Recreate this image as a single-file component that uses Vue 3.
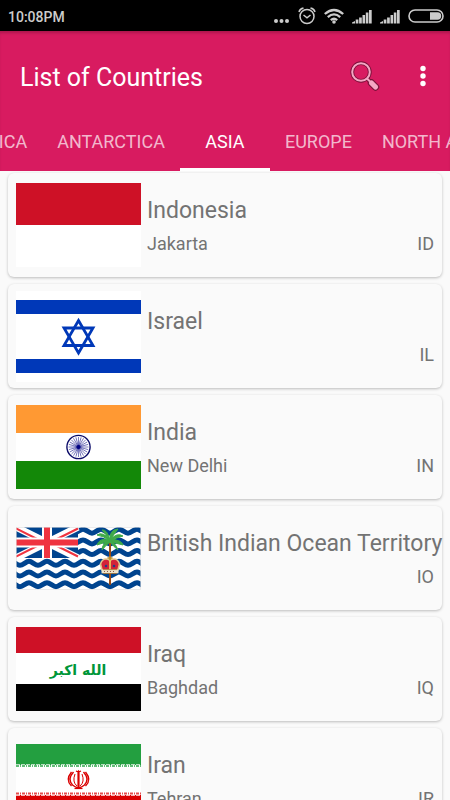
<script setup>
import { ref } from 'vue'

const tabs = ['Africa', 'Antarctica', 'Asia', 'Europe', 'North America']
const activeTab = ref('Asia')

const countries = [
  { code: 'ID', name: 'Indonesia', capital: 'Jakarta' },
  { code: 'IL', name: 'Israel', capital: '' },
  { code: 'IN', name: 'India', capital: 'New Delhi' },
  { code: 'IO', name: 'British Indian Ocean Territory', capital: '' },
  { code: 'IQ', name: 'Iraq', capital: 'Baghdad' },
  { code: 'IR', name: 'Iran', capital: 'Tehran' }
]

// one wavy stripe, 18 units per period
const wave = (y) => {
  let d = `M-5 ${y}`
  for (let x = -5; x < 130; x += 18) {
    d += 'c3 0 6 4 9 4s6 -4 9 -4'
  }
  return d
}
</script>

<template>
  <div class="app">
    <div class="status-bar">
      <span class="clock">10:08PM</span>
      <svg class="status-dots" viewBox="0 0 16 20" width="16" height="20" fill="#ccc">
        <circle cx="2" cy="15" r="2"/>
        <circle cx="7.500" cy="15" r="2"/>
        <circle cx="13" cy="15" r="2"/>
      </svg>
      <svg class="status-alarm" viewBox="0 0 18 20" width="18" height="20" fill="none" stroke="#ccc" stroke-width="1.500">
        <circle cx="9" cy="10.500" r="7"/>
        <path d="M5.500 9L9 11.800L12.500 9M1 6C1.500 4 3 2.500 5.500 2M17 6C16.500 4 15 2.500 12.500 2"/>
      </svg>
      <svg class="status-wifi" viewBox="0 0 20 20" width="20" height="20" fill="none" stroke="#ccc" stroke-width="2.300">
        <path d="M0.800 8Q10 0 19.200 8M3.800 11.200Q10 5.600 16.200 11.200M6.800 14.200Q10 11.400 13.200 14.200"/>
        <circle cx="10" cy="16" r="1.800" fill="#ccc" stroke="none"/>
      </svg>
      <svg v-for="n in 2" :key="n" class="status-signal" viewBox="0 0 20 20" width="20" height="20" fill="#ccc">
        <path d="M0 17.500v-1l3-1.500v2.500zM3.700 17.500v-4h2.700v4zM7.100 17.500v-6h2.700v6zM10.500 17.500V9h2.600v8.500zM13.800 17.500V6.500h2.600v11zM17 17.500V4h2.700v13.500z"/>
      </svg>
      <svg class="status-battery" viewBox="0 0 36 20" width="36" height="20">
        <rect x="1" y="4" width="34" height="12" rx="6" fill="none" stroke="#ccc" stroke-width="1.600"/>
        <path d="M22 6.300h7.500a3.700 3.700 0 0 1 0 7.400h-7.500z" fill="#ccc"/>
      </svg>
    </div>

    <header class="header">
      <div class="toolbar">
        <h1 class="title">List of Countries</h1>
        <button class="icon-button" type="button" aria-label="Search">
          <svg viewBox="0 0 30 30" width="30" height="30" fill="none">
            <circle cx="11" cy="11" r="8.800" stroke="#7a1039" stroke-width="3.800"/>
            <path d="M17 17.500L20 20.500" stroke="#7a1039" stroke-width="4"/>
            <path d="M21.500 22L25.500 26" stroke="#7a1039" stroke-width="7.400" stroke-linecap="round"/>
            <circle cx="11" cy="11" r="8.800" stroke="#f5a6c4" stroke-width="2"/>
            <path d="M17 17.500L20 20.500" stroke="#f5a6c4" stroke-width="2"/>
            <path d="M21.500 22L25.500 26" stroke="#f5a6c4" stroke-width="5.200" stroke-linecap="round"/>
          </svg>
        </button>
        <button class="icon-button" type="button" aria-label="More options">
          <svg viewBox="0 0 30 30" width="30" height="30" fill="#fff">
            <circle cx="15" cy="7.500" r="2.700"/>
            <circle cx="15" cy="15" r="2.700"/>
            <circle cx="15" cy="22.500" r="2.700"/>
          </svg>
        </button>
      </div>
      <nav class="tabs">
        <button
          v-for="tab in tabs"
          :key="tab"
          type="button"
          class="tab"
          :class="{ 'is-active': tab === activeTab }"
          @click="activeTab = tab"
        >
          {{ tab }}
        </button>
      </nav>
    </header>

    <main class="list">
      <article v-for="country in countries" :key="country.code" class="card">
        <div class="flag">
          <!-- Indonesia -->
          <svg v-if="country.code === 'ID'" viewBox="0 0 125 84">
            <rect width="125" height="84" fill="#fff"/>
            <rect width="125" height="42" fill="#ce1126"/>
          </svg>

          <!-- Israel -->
          <svg v-else-if="country.code === 'IL'" viewBox="0 0 125 91">
            <rect width="125" height="91" fill="#fff"/>
            <rect y="9" width="125" height="14" fill="#0038b8"/>
            <rect y="68" width="125" height="14" fill="#0038b8"/>
            <g fill="none" stroke="#0038b8" stroke-width="2.800">
              <path d="M62.500 29.500L77 54.500H48z"/>
              <path d="M62.500 62L77 37H48z"/>
            </g>
          </svg>

          <!-- India -->
          <svg v-else-if="country.code === 'IN'" viewBox="0 0 125 84">
            <rect width="125" height="84" fill="#fff"/>
            <rect width="125" height="28" fill="#ff9933"/>
            <rect y="56" width="125" height="28" fill="#138808"/>
            <circle cx="62.500" cy="42" r="11.600" fill="#fff" stroke="#0b0b68" stroke-width="1.400"/>
            <g stroke="#000080" stroke-width="0.500">
              <line
                v-for="n in 24"
                :key="n"
                x1="62.500"
                y1="42"
                x2="62.500"
                y2="32"
                :transform="`rotate(${n * 15} 62.500 42)`"
              />
            </g>
            <circle cx="62.500" cy="42" r="2" fill="#000080"/>
          </svg>

          <!-- British Indian Ocean Territory -->
          <svg v-else-if="country.code === 'IO'" viewBox="0 0 125 63">
            <rect width="125" height="63" fill="#fff"/>
            <g fill="none" stroke="#00448f" stroke-width="5">
              <path v-for="n in 6" :key="n" :d="wave(n * 10.700 - 8.500)"/>
            </g>
            <rect width="62" height="31" fill="#00448f"/>
            <path d="M0 0L62 31M62 0L0 31" stroke="#fff" stroke-width="7"/>
            <path d="M0 1.500L26 14.500M36 16.500L62 29.500M62 1.500L36 14.500M26 16.500L0 29.500" stroke="#ef3340" stroke-width="2"/>
            <path d="M31 0V31M0 15.500H62" stroke="#fff" stroke-width="10"/>
            <path d="M31 0V31M0 15.500H62" stroke="#ef3340" stroke-width="6"/>
            <path d="M94 14V58" stroke="#9a4a14" stroke-width="2"/>
            <g fill="#3faa49" stroke="#3faa49" stroke-width="1">
              <path d="M94 13Q87 4 81 8Q88 9 94 14z"/>
              <path d="M94 13Q91 2 86 3Q90 7 94 14z"/>
              <path d="M94 13Q93 3 102 2Q97 8 94 14z"/>
              <path d="M94 13Q101 5 107 9Q99 11 94 14z"/>
              <path d="M94 12Q106 13 107 18Q100 16 94 15z"/>
              <path d="M94 12Q83 11 81 18Q88 15 94 15z"/>
              <path d="M94 13Q86 16 86 23Q90 18 94 15z"/>
              <path d="M94 13Q101 18 102 23Q97 19 94 15z"/>
            </g>
            <path d="M86 43L84.500 37Q86 32 90 32Q94 32 94 35Q94 32 98 32Q102 32 103.500 37L102 43z" fill="#d32338" stroke="#e3c68a" stroke-width="1.600"/>
            <path d="M94 31V44" stroke="#e8c55a" stroke-width="1.800"/>
            <path d="M91.500 31H96.500M94 29V33" stroke="#b98b2c" stroke-width="1.400"/>
            <path d="M85.500 44.500H102.500" stroke="#efe3c8" stroke-width="3.600"/>
            <path d="M87 42.600H101M87 46.500H101" stroke="#a8742e" stroke-width="0.800"/>
            <path d="M88 44.500H100" stroke="#8c5a4a" stroke-width="1" stroke-dasharray="1 2"/>
            <circle cx="90" cy="39" r="1.300" fill="#243c86"/>
            <circle cx="98" cy="39" r="1.300" fill="#243c86"/>
            <rect x="0.500" y="0.500" width="124" height="62" fill="none" stroke="#ddd" stroke-opacity="0.600"/>
          </svg>

          <!-- Iraq -->
          <svg v-else-if="country.code === 'IQ'" viewBox="0 0 125 84">
            <rect width="125" height="84" fill="#fff"/>
            <rect width="125" height="26" fill="#ce1126"/>
            <rect y="57" width="125" height="27" fill="#000"/>
            <text class="takbir" x="62" y="48" text-anchor="middle">الله اكبر</text>
          </svg>

          <!-- Iran -->
          <svg v-else viewBox="0 0 125 72">
            <rect width="125" height="72" fill="#fff"/>
            <rect width="125" height="21" fill="#239f40"/>
            <rect y="51" width="125" height="21" fill="#da0000"/>
            <path d="M0 22H125" stroke="#239f40" stroke-opacity="0.700" stroke-width="2" stroke-dasharray="3 1 1 1"/>
            <path d="M0 20.500H125" stroke="#b5dfbf" stroke-width="1" stroke-dasharray="4 1"/>
            <path d="M0 49.500H125" stroke="#da0000" stroke-opacity="0.700" stroke-width="2" stroke-dasharray="3 1 1 1"/>
            <path d="M0 51.500H125" stroke="#f6b5b5" stroke-width="1" stroke-dasharray="4 1"/>
            <g fill="none" stroke="#da0000">
              <path d="M62.500 28V44.500" stroke-width="2.200"/>
              <path d="M60 27Q62 28 62.500 27Q63 28 65 27" stroke-width="1.200"/>
              <path d="M57.500 28Q51 35 56.500 41Q59 43 62 44" stroke-width="1.500"/>
              <path d="M67.500 28Q74 35 68.500 41Q66 43 63 44" stroke-width="1.500"/>
              <path d="M55.500 28Q49 36 55.500 42" stroke-width="1.400"/>
              <path d="M69.500 28Q76 36 69.500 42" stroke-width="1.400"/>
              <path d="M59 30Q56 38 61 42M66 30Q69 38 64 42" stroke-width="1"/>
              <path d="M58.500 44.500H66.500" stroke-width="1.200"/>
            </g>
          </svg>
        </div>
        <div class="info">
          <h2 class="name">{{ country.name }}</h2>
          <div class="details">
            <span>{{ country.capital }}</span>
            <span class="code">{{ country.code }}</span>
          </div>
        </div>
      </article>
    </main>
  </div>
</template>

<style>
body {
  margin: 0;
  background: #fafafa;
}
</style>

<style scoped>
.app {
  display: flex;
  flex-direction: column;
  height: 100vh;
  overflow: hidden;
  background: #fafafa;
  font-family: Roboto, "Liberation Sans", sans-serif;
}

.status-bar {
  display: flex;
  align-items: center;
  flex: none;
  height: 31px;
  padding: 0 6px 0 8px;
  box-sizing: border-box;
  background: #000;
}

.clock {
  flex: 1;
  padding-top: 2px;
  color: #ccc;
  font-size: 14px;
  font-weight: 500;
  line-height: 20px;
}

.status-alarm,
.status-wifi,
.status-signal,
.status-battery {
  margin-left: 8px;
}

.header {
  flex: none;
  background: #d81b60;
  box-shadow: inset 0 3px 3px -1px rgba(0, 0, 0, 0.2);
}

.toolbar {
  display: flex;
  align-items: center;
  height: 82px;
  padding: 8px 12px 0 20px;
  box-sizing: border-box;
}

.title {
  flex: 1;
  margin: 0;
  padding-top: 4px;
  color: #fff;
  font-size: 25px;
  font-weight: 400;
  line-height: 32px;
}

.icon-button {
  padding: 0;
  border: 0;
  background: none;
  cursor: pointer;
}

.icon-button + .icon-button {
  margin-left: 28px;
}

.icon-button svg {
  display: block;
}

.tabs {
  display: flex;
  margin-left: -49px;
  overflow: hidden;
}

.tab {
  flex: none;
  min-width: 90px;
  height: 58px;
  padding: 2px 15px 0;
  border: 0;
  border-bottom: 3px solid transparent;
  background: none;
  color: rgba(255, 255, 255, 0.7);
  font-family: inherit;
  font-size: 18px;
  text-transform: uppercase;
  white-space: nowrap;
  cursor: pointer;
}

.tab.is-active {
  border-bottom-color: #fff;
  color: #fff;
}

.list {
  flex: 1;
  display: flex;
  flex-direction: column;
  gap: 7px;
  min-height: 0;
  padding: 2px 8px;
  overflow: hidden;
}

.card {
  display: flex;
  align-items: center;
  flex: none;
  height: 104px;
  padding: 0 8px;
  box-sizing: border-box;
  border-radius: 6px;
  background: #fafafa;
  box-shadow: 0 1px 3px rgba(0, 0, 0, 0.25);
}

.flag {
  flex: none;
  width: 125px;
}

.flag svg {
  display: block;
  width: 100%;
}

.takbir {
  fill: #009639;
  font-family: "DejaVu Sans", sans-serif;
  font-size: 14px;
  font-weight: 700;
}

.info {
  flex: 1;
  min-width: 0;
  padding: 4px 0 0 6px;
  color: #737373;
}

.name {
  margin: 0;
  font-size: 23px;
  font-weight: 400;
  line-height: 34px;
  white-space: nowrap;
}

.details {
  display: flex;
  justify-content: space-between;
  font-size: 18px;
  line-height: 32px;
}
</style>
